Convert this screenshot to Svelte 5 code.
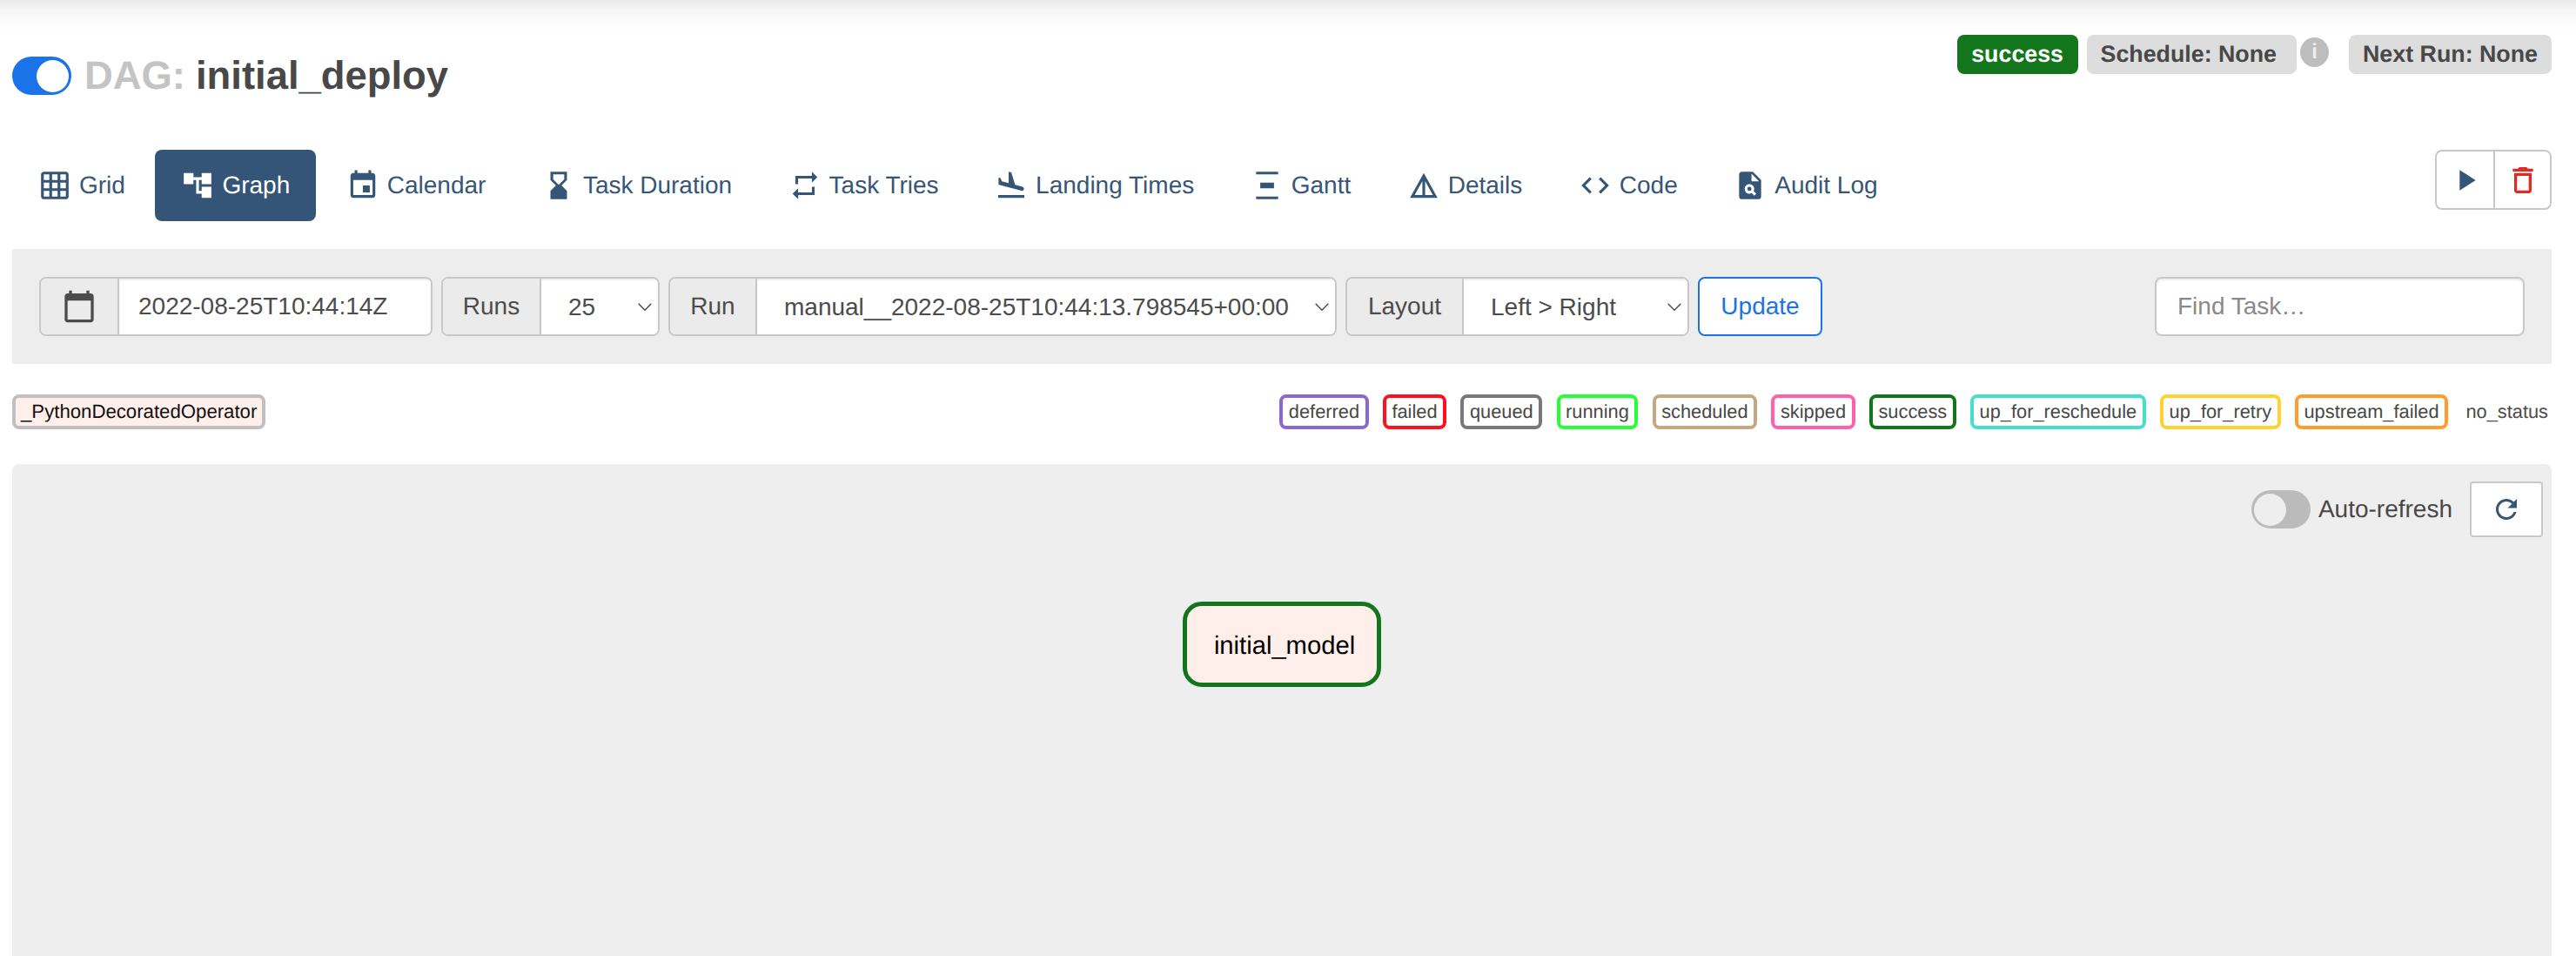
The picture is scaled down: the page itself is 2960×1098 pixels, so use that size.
<script lang="ts">
	const tabs = [
		{ label: 'Grid', path: 'M20 2H4c-1.1 0-2 .9-2 2v16c0 1.1.9 2 2 2h16c1.1 0 2-.9 2-2V4c0-1.1-.9-2-2-2zM8 20H4v-4h4v4zm0-6H4v-4h4v4zm0-6H4V4h4v4zm6 12h-4v-4h4v4zm0-6h-4v-4h4v4zm0-6h-4V4h4v4zm6 12h-4v-4h4v4zm0-6h-4v-4h4v4zm0-6h-4V4h4v4z' },
		{ label: 'Graph', active: true, path: 'M22 11V3h-7v3H9V3H2v8h7V8h2v10h4v3h7v-8h-7v3h-2V8h2v3z' },
		{ label: 'Calendar', path: 'M17 12h-5v5h5v-5zM16 1v2H8V1H6v2H5c-1.11 0-1.99.9-1.99 2L3 19c0 1.1.89 2 2 2h14c1.1 0 2-.9 2-2V5c0-1.1-.9-2-2-2h-1V1h-2zm3 18H5V8h14v11z' },
		{ label: 'Task Duration', path: 'M18 22l-.01-6L14 12l3.99-4.01L18 2H6v6l4 4-4 3.99V22h12zM8 7.5V4h8v3.5l-4 4-4-4z' },
		{ label: 'Task Tries', path: 'M7 7h10v3l4-4-4-4v3H5v6h2V7zm10 10H7v-3l-4 4 4 4v-3h12v-6h-2v4z' },
		{ label: 'Landing Times', path: 'M2.5 19h19v2h-19zm7.18-5.73l4.35 1.16 5.31 1.42c.8.21 1.62-.26 1.84-1.06.21-.8-.26-1.62-1.06-1.84l-5.31-1.42-2.76-9.02L10.12 2v8.28L5.15 8.95l-.93-2.32-1.45-.39v5.17l1.6.43 5.31 1.43z' },
		{ label: 'Gantt', path: 'M4 22h16v-2H4v2zM4 2v2h16V2H4zm3 8v4h10v-4H7z' },
		{ label: 'Details', path: 'M12 3L2 21h20L12 3zm1 5.92L18.6 19H13V8.92zm-2 0V19H5.4L11 8.92z' },
		{ label: 'Code', path: 'M9.4 16.6L4.8 12l4.6-4.6L8 6l-6 6 6 6 1.4-1.4zm5.2 0l4.6-4.6-4.6-4.6L16 6l6 6-6 6-1.4-1.4z' },
		{ label: 'Audit Log', path: 'M14 2H6c-1.1 0-1.99.9-1.99 2L4 20c0 1.1.89 2 1.99 2H18c1.1 0 2-.9 2-2V8l-6-6zm1.04 17.45l-1.88-1.88c-1.33.71-3.01.53-4.13-.59-1.37-1.37-1.37-3.58 0-4.95 1.37-1.37 3.58-1.37 4.95 0 1.12 1.12 1.31 2.8.59 4.13l1.88 1.88-1.41 1.41zM13 9V3.5L18.5 9H13zM11.5 16a1.5 1.5 0 1 0 0-3 1.5 1.5 0 0 0 0 3z' }
	];

	const states = [
		{ label: 'deferred', color: '#8a68d0' },
		{ label: 'failed', color: '#ff0f1f' },
		{ label: 'queued', color: '#787878' },
		{ label: 'running', color: '#26ff33' },
		{ label: 'scheduled', color: '#c6a880' },
		{ label: 'skipped', color: '#ff60ae' },
		{ label: 'success', color: '#13761c' },
		{ label: 'up_for_reschedule', color: '#45dfce' },
		{ label: 'up_for_retry', color: '#ffd22f' },
		{ label: 'upstream_failed', color: '#ff9c2b' }
	];
</script>

<div class="page">
	<div class="nav-shadow"></div>

	<div class="title-row">
		<h4 class="title">
			<span class="switch switch--on"><span class="switch__knob"></span></span>
			<span class="title__dag">DAG:</span>
			<span>initial_deploy</span>
		</h4>
		<div class="badges">
			<span class="label label--success">success</span>
			<span class="label label--schedule">Schedule: None</span>
			<span class="info">i</span>
			<span class="label label--next">Next Run: None</span>
		</div>
	</div>

	<div class="tab-row">
		<ul class="tabs">
			{#each tabs as tab}
				<li class="tab" class:tab--active={tab.active}>
					<svg class="tab__icon" viewBox="0 0 24 24"><path d={tab.path} /></svg>
					{tab.label}
				</li>
			{/each}
		</ul>
		<div class="actions">
			<button class="action" aria-label="Trigger DAG">
				<svg viewBox="0 0 24 24" class="action__icon"><path d="M8 5v14l11-7z" /></svg>
			</button>
			<button class="action action--delete" aria-label="Delete DAG">
				<svg viewBox="0 0 24 24" class="action__icon"><path d="M6 19c0 1.1.9 2 2 2h8c1.1 0 2-.9 2-2V7H6v12zM8 9h8v10H8V9zm7.5-5l-1-1h-5l-1 1H5v2h14V4h-3.5z" /></svg>
			</button>
		</div>
	</div>

	<div class="toolbar">
		<div class="group">
			<span class="addon addon--date">
				<svg viewBox="0 0 24 24" class="addon__icon"><path d="M20 3h-1V1h-2v2H7V1H5v2H4c-1.1 0-2 .9-2 2v16c0 1.1.9 2 2 2h16c1.1 0 2-.9 2-2V5c0-1.1-.9-2-2-2zm0 18H4V8h16v13z" /></svg>
			</span>
			<input class="field field--date" value="2022-08-25T10:44:14Z" />
		</div>
		<div class="group">
			<span class="addon addon--runs">Runs</span>
			<div class="select select--runs">
				<select class="field"><option>25</option></select>
				<svg class="chevron" viewBox="0 0 16 9"><path d="M.7.7 8 8.2 15.3.7" /></svg>
			</div>
		</div>
		<div class="group">
			<span class="addon addon--run">Run</span>
			<div class="select select--run">
				<select class="field"><option>manual__2022-08-25T10:44:13.798545+00:00</option></select>
				<svg class="chevron" viewBox="0 0 16 9"><path d="M.7.7 8 8.2 15.3.7" /></svg>
			</div>
		</div>
		<div class="group">
			<span class="addon addon--layout">Layout</span>
			<div class="select select--layout">
				<select class="field"><option>Left &gt; Right</option></select>
				<svg class="chevron" viewBox="0 0 16 9"><path d="M.7.7 8 8.2 15.3.7" /></svg>
			</div>
		</div>
		<button class="update">Update</button>
		<input class="search" placeholder="Find Task…" />
	</div>

	<div class="legend">
		<span class="chip chip--operator">_PythonDecoratedOperator</span>
		<div class="legend__states">
			{#each states as state}
				<span class="chip" style="border-color: {state.color}">{state.label}</span>
			{/each}
			<span class="no-status">no_status</span>
		</div>
	</div>

	<div class="graph">
		<div class="graph__controls">
			<span class="switch switch--off"><span class="switch__knob"></span></span>
			<span class="graph__auto">Auto-refresh</span>
			<button class="refresh" aria-label="Refresh">
				<svg viewBox="0 0 24 24"><path d="M17.65 6.35C16.2 4.9 14.21 4 12 4c-4.42 0-7.99 3.58-7.99 8s3.57 8 7.99 8c3.73 0 6.84-2.55 7.73-6h-2.08c-.82 2.33-3.04 4-5.65 4-3.31 0-6-2.69-6-6s2.69-6 6-6c1.66 0 3.14.69 4.22 1.78L13 11h7V4l-2.35 2.35z" /></svg>
			</button>
		</div>
		<div class="node">initial_model</div>
	</div>
</div>

<style>
	:global(body) {
		margin: 0;
		background: #fff;
	}

	.page {
		box-sizing: border-box;
		width: 2960px;
		height: 1098px;
		overflow: hidden;
		padding: 0 28px 0 14px;
		font-family: 'Liberation Sans', Arial, sans-serif;
		font-size: 28px;
		color: #4c4c4c;
		text-rendering: geometricPrecision;
	}

	.nav-shadow {
		height: 40px;
		margin: 0 -28px 0 -14px;
		background: linear-gradient(#e9e9e9 0, #f6f6f6 12px, #fff 36px);
	}

	.title-row {
		display: flex;
		justify-content: space-between;
		align-items: flex-start;
		height: 132px;
	}

	.title {
		display: flex;
		align-items: center;
		gap: 15px;
		height: 94px;
		margin: 0;
		font-size: 45.4px;
		font-weight: 700;
		color: #484848;
	}

	.title__dag {
		color: #c4c4c4;
		margin-right: -3px;
	}

	.switch {
		display: inline-flex;
		box-sizing: border-box;
		width: 68px;
		height: 44px;
		border-radius: 22px;
		padding: 3.5px;
		flex-shrink: 0;
	}

	.switch--on {
		background: #1a73e8;
		justify-content: flex-end;
	}

	.switch--off {
		background: #bbb;
		justify-content: flex-start;
	}

	.switch__knob {
		width: 37px;
		height: 37px;
		border-radius: 50%;
		background: #fff;
	}

	.switch--off .switch__knob {
		background: #eee;
	}

	.badges {
		display: flex;
		align-items: flex-start;
	}

	.label {
		box-sizing: border-box;
		height: 45px;
		line-height: 45px;
		padding: 0 16px;
		border-radius: 8px;
		background: #ddd;
		color: #484848;
		font-size: 26.8px;
		font-weight: 700;
	}

	.label--success {
		background: #13761c;
		color: #fff;
		margin-right: 10px;
		padding: 0 16.5px;
	}

	.label--schedule {
		padding-right: 23px;
	}

	.label--next {
		margin-left: 23px;
	}

	.info {
		width: 33px;
		height: 34px;
		margin: 3px 0 0 4px;
		border-radius: 50%;
		background: #bdbdbd;
		color: #eee;
		font-size: 24px;
		font-weight: 700;
		line-height: 34px;
		text-align: center;
	}

	.tab-row {
		display: flex;
		justify-content: space-between;
		align-items: flex-start;
		height: 82px;
	}

	.tabs {
		display: flex;
		gap: 4.5px;
		list-style: none;
		margin: 0;
		padding: 0;
	}

	.tab {
		display: flex;
		align-items: center;
		height: 82px;
		padding: 0 30px;
		border-radius: 8px;
		color: #365678;
		white-space: nowrap;
	}

	.tab--active {
		background: #345577;
		color: #fff;
	}

	.tab__icon {
		width: 38px;
		height: 38px;
		margin-right: 9px;
		fill: currentColor;
	}

	.actions {
		display: flex;
		box-sizing: border-box;
		height: 69px;
		border: 2px solid #c8c8c8;
		border-radius: 8px;
		background: #fff;
	}

	.action {
		display: flex;
		align-items: center;
		justify-content: center;
		width: 65px;
		padding: 0;
		border: 0;
		background: none;
		color: #365678;
	}

	.action--delete {
		border-left: 2px solid #c8c8c8;
		color: #e02b27;
	}

	.action__icon {
		width: 40px;
		height: 40px;
		fill: currentColor;
	}

	.toolbar {
		display: flex;
		gap: 10px;
		margin-top: 32px;
		padding: 32px 31px;
		background: #ededed;
	}

	.group {
		display: flex;
		box-sizing: border-box;
		height: 68px;
		border: 2px solid #c8c8c8;
		border-radius: 8px;
		overflow: hidden;
		background: #fff;
	}

	.addon {
		display: flex;
		align-items: center;
		justify-content: center;
		box-sizing: border-box;
		background: #ebebeb;
		border-right: 2px solid #c8c8c8;
	}

	.addon--date {
		width: 90px;
	}

	.addon--runs {
		width: 113px;
	}

	.addon--run {
		width: 100px;
	}

	.addon--layout {
		width: 134px;
	}

	.addon__icon {
		width: 40px;
		height: 40px;
		fill: #4c4c4c;
	}

	.field {
		box-sizing: border-box;
		height: 100%;
		width: 100%;
		padding: 0 0 0 31px;
		border: 0;
		outline: 0;
		appearance: none;
		background: #fff;
		box-shadow: inset 0 2px 2px rgba(0, 0, 0, 0.075);
		font: inherit;
		color: inherit;
	}

	.field--date {
		width: 358px;
		padding-left: 22px;
	}

	.select {
		position: relative;
	}

	.select--runs {
		width: 134px;
	}

	.select--run {
		width: 664px;
	}

	.select--layout {
		width: 257px;
	}

	.chevron {
		position: absolute;
		right: 7px;
		top: 28px;
		width: 16px;
		height: 9px;
		fill: none;
		stroke: #484848;
		stroke-width: 1.4;
	}

	.update {
		box-sizing: border-box;
		width: 143px;
		height: 68px;
		padding: 0;
		border: 2px solid #1a73e8;
		border-radius: 8px;
		background: #fff;
		color: #1a73e8;
		font: inherit;
	}

	.search {
		box-sizing: border-box;
		width: 425px;
		height: 68px;
		margin-left: auto;
		padding: 0 24px;
		border: 2px solid #c8c8c8;
		border-radius: 8px;
		outline: 0;
		box-shadow: inset 0 2px 2px rgba(0, 0, 0, 0.075);
		font: inherit;
		color: inherit;
	}

	.search::placeholder {
		color: #8a8a8a;
		opacity: 1;
	}

	.legend {
		display: flex;
		justify-content: space-between;
		align-items: center;
		padding: 35px 4px 40px 0;
		font-size: 21.8px;
	}

	.legend__states {
		display: flex;
		align-items: center;
		gap: 16.4px;
	}

	.chip {
		box-sizing: border-box;
		height: 40px;
		line-height: 32px;
		padding: 0 6.5px;
		border: 4px solid #c0c0c0;
		border-radius: 8px;
		background: #fff;
		color: #484848;
		white-space: nowrap;
	}

	.chip--operator {
		padding: 0 6px;
		background: #ffefeb;
		color: #111;
		font-size: 22.2px;
	}

	.no-status {
		margin-left: 4px;
	}

	.graph {
		position: relative;
		height: 565px;
		background: #eee;
		border-radius: 8px 8px 0 0;
	}

	.graph__controls {
		display: flex;
		justify-content: flex-end;
		align-items: center;
		padding: 20px 10px 0 0;
		color: #484848;
	}

	.graph__auto {
		margin: 0 20px 0 9px;
	}

	.refresh {
		display: flex;
		align-items: center;
		justify-content: center;
		box-sizing: border-box;
		width: 84px;
		height: 64px;
		padding: 0;
		border: 2px solid #c8c8c8;
		border-radius: 4px;
		background: #fff;
	}

	.refresh svg {
		width: 36px;
		height: 36px;
		fill: #365678;
	}

	.node {
		position: absolute;
		left: 1345px;
		top: 158px;
		display: flex;
		align-items: center;
		justify-content: center;
		box-sizing: border-box;
		width: 228px;
		height: 98px;
		padding: 4px 0 0 6px;
		border: 5px solid #13761c;
		border-radius: 22px;
		background: #ffefeb;
		color: #000;
		font-size: 29.2px;
	}
</style>
